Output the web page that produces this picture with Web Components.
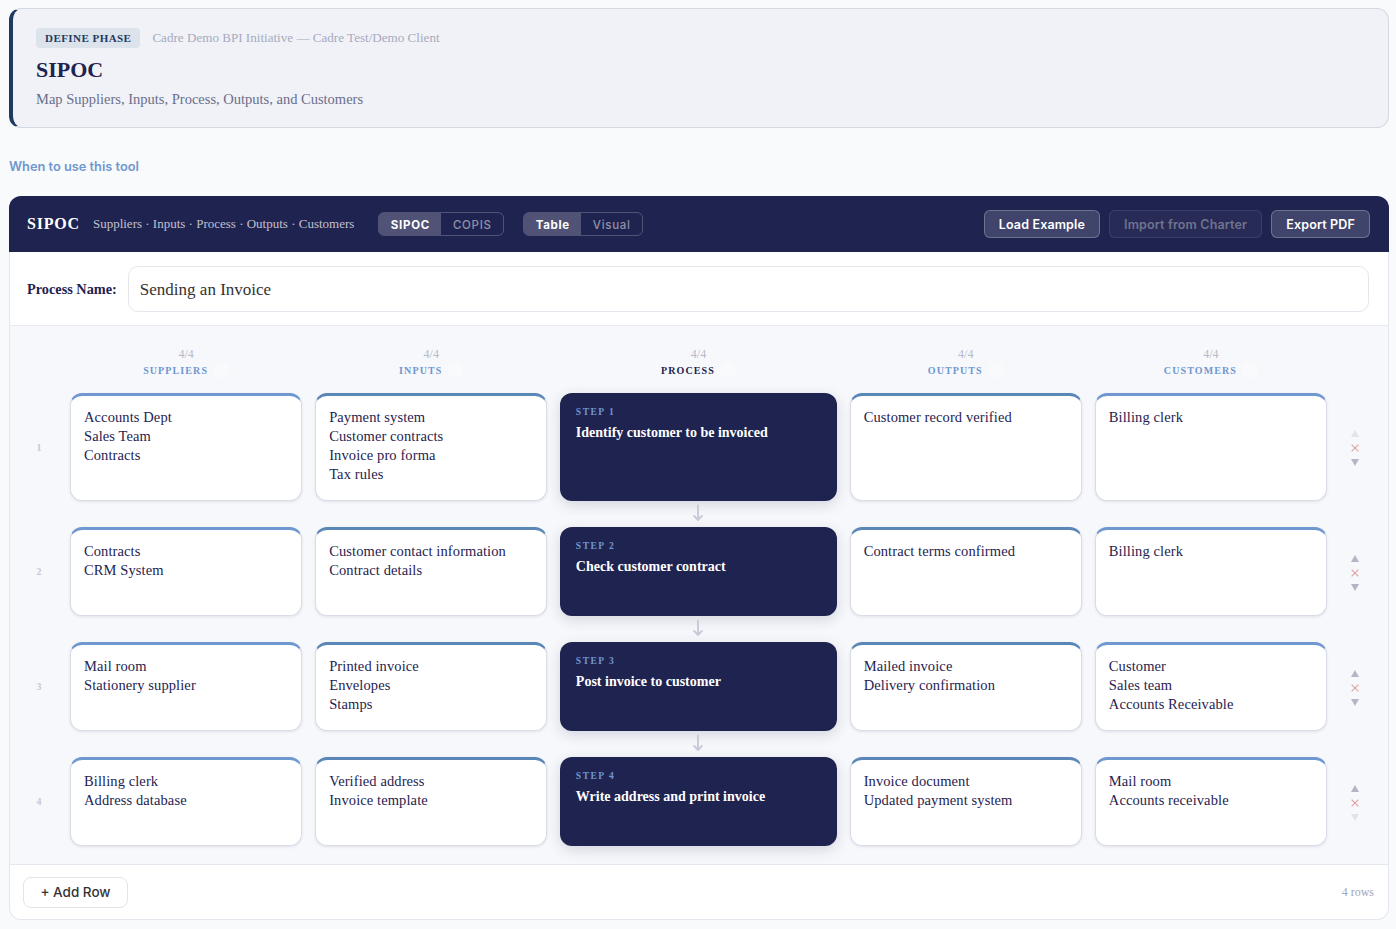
<!DOCTYPE html>
<html lang="en">
<head>
<meta charset="utf-8">
<title>SIPOC</title>
<style>
  html, body { margin: 0; padding: 0; }
  body {
    background: #f9fafc;
    padding: 8px 7px 8px 9px;
    font-family: "Liberation Serif", serif;
    color: #1f2350;
  }
</style>
</head>
<body>
<phase-header phase="DEFINE PHASE" meta="Cadre Demo BPI Initiative — Cadre Test/Demo Client" heading="SIPOC" sub="Map Suppliers, Inputs, Process, Outputs, and Customers"></phase-header>
<help-link>When to use this tool</help-link>
<sipoc-tool></sipoc-tool>

<script>
const SERIF = '"Liberation Serif", serif';
const SANS = 'Inter, "Liberation Sans", sans-serif';
const GRID_COLS = '30px 1fr 1fr 1.19fr 1fr 1fr 30px';

// Page header card
class PhaseHeader extends HTMLElement {
  connectedCallback() {
    this.attachShadow({ mode: 'open' });
    this.shadowRoot.innerHTML = `
      <style>
        :host {
          display: block;
          box-sizing: border-box;
          height: 120px;
          padding: 19px 23px 0;
          background: #f0f2f7;
          border: 1px solid #d3d8e3;
          border-left: 4px solid #1e3a5f;
          border-radius: 12px;
          font-family: ${SERIF};
        }
        .top { display: flex; align-items: center; gap: 12px; height: 20px; }
        .badge {
          background: #dde3eb;
          color: #1e3a5f;
          font-size: 11px;
          font-weight: 700;
          letter-spacing: .45px;
          padding: 0 9px;
          line-height: 20px;
          border-radius: 4px;
        }
        .meta { font-size: 13.1px; color: #a7aabd; }
        h1 { margin: 7px 0 0; font-size: 22px; line-height: 30px; font-weight: 700; color: #1f2350; }
        p { margin: 5px 0 0; font-size: 14.5px; line-height: 18px; color: #6b6e8a; }
      </style>
      <div class="top"><span class="badge">${this.getAttribute('phase')}</span><span class="meta">${this.getAttribute('meta')}</span></div>
      <h1>${this.getAttribute('heading')}</h1>
      <p>${this.getAttribute('sub')}</p>`;
  }
}

class HelpLink extends HTMLElement {
  connectedCallback() {
    this.attachShadow({ mode: 'open' });
    this.shadowRoot.innerHTML = `
      <style>
        :host {
          display: block;
          height: 68px;
          box-sizing: border-box;
          padding-top: 30px;
          font: 600 12.8px/18px ${SANS};
          color: #6f97d0;
        }
      </style><slot></slot>`;
  }
}

// Two-option pill in the dark bar
class SegToggle extends HTMLElement {
  connectedCallback() {
    this.attachShadow({ mode: 'open' });
    const opts = this.getAttribute('options').split(',');
    this.shadowRoot.innerHTML = `
      <style>
        :host {
          display: inline-flex;
          height: 24px;
          box-sizing: border-box;
          border: 1px solid rgba(255,255,255,.22);
          border-radius: 6px;
          overflow: hidden;
          font: 600 11.5px/24px ${SANS};
          letter-spacing: .7px;
        }
        span { padding: 0 11.5px; color: rgba(255,255,255,.5); font-weight: 500; }
        span.on { background: rgba(255,255,255,.22); color: #fff; font-weight: 700; }
      </style>
      ${opts.map((o, i) => `<span class="${i === 0 ? 'on' : ''}">${o}</span>`).join('')}`;
  }
}

class BarButton extends HTMLElement {
  connectedCallback() {
    this.attachShadow({ mode: 'open' });
    this.shadowRoot.innerHTML = `
      <style>
        :host {
          display: inline-block;
          box-sizing: border-box;
          height: 28px;
          padding: 0 14px;
          border: 1px solid rgba(255,255,255,.25);
          border-radius: 6px;
          background: rgba(255,255,255,.15);
          color: #fff;
          font: 600 12.5px/27px ${SANS};
          letter-spacing: .15px;
        }
        :host([disabled]) {
          background: rgba(255,255,255,.04);
          border-color: rgba(255,255,255,.1);
          color: rgba(255,255,255,.35);
        }
      </style><slot></slot>`;
  }
}

// One row of the table: number, five cells, controls
class SipocRow extends HTMLElement {
  connectedCallback() {
    this.attachShadow({ mode: 'open' });
    this.shadowRoot.innerHTML = `
      <style>
        :host {
          display: grid;
          grid-template-columns: ${GRID_COLS};
          column-gap: 13px;
        }
      </style><slot></slot>`;
  }
}

class ColHead extends HTMLElement {
  connectedCallback() {
    this.attachShadow({ mode: 'open' });
    const label = this.getAttribute('label');
    const dark = this.hasAttribute('dark');
    this.shadowRoot.innerHTML = `
      <style>
        :host { display: block; text-align: center; font-family: ${SERIF}; padding-top: 1px; }
        .count { font-size: 12px; line-height: 14px; color: #b6b9c8; }
        .label {
          display: flex;
          justify-content: center;
          align-items: center;
          gap: 5px;
          height: 16px;
          margin-top: 1px;
          font-size: 10px;
          font-weight: 700;
          letter-spacing: 1.1px;
          color: ${dark ? '#1f2350' : '#6f97d0'};
        }
        i { width: 16px; height: 16px; border-radius: 50%; background: #f9fafc; }
      </style>
      <div class="count">${this.getAttribute('count')}</div>
      <div class="label">${label}<i></i></div>`;
  }
}

class SipocCell extends HTMLElement {
  connectedCallback() {
    this.attachShadow({ mode: 'open' });
    this.shadowRoot.innerHTML = `
      <style>
        :host {
          display: block;
          box-sizing: border-box;
          min-height: 89px;
          padding: 12px 14px 16px 13px;
          background: #fff;
          border: 1px solid #d9dce6;
          border-top: 3px solid var(--accent, #6f97d0);
          border-radius: 12px;
          box-shadow: 0 1px 3px rgba(31,35,80,.1);
          font: 14.5px/19px ${SERIF};
          letter-spacing: .1px;
          color: #1f2350;
        }
        .t { white-space: pre-line; }
      </style><div class="t"><slot></slot></div>`;
  }
}

class StepCell extends HTMLElement {
  connectedCallback() {
    this.attachShadow({ mode: 'open' });
    const last = this.hasAttribute('last');
    this.shadowRoot.innerHTML = `
      <style>
        :host {
          display: block;
          position: relative;
          box-sizing: border-box;
          padding: 13px 15.5px;
          background: #1f2350;
          border-radius: 12px;
          box-shadow: 0 4px 14px rgba(31,35,80,.16);
          font-family: ${SERIF};
          color: #fff;
        }
        .n { font-size: 9.5px; line-height: 12px; font-weight: 700; letter-spacing: 1.5px; color: #6f97d0; }
        .t { margin-top: 5px; font-size: 14px; line-height: 19px; font-weight: 700; }
        svg { position: absolute; left: 50%; bottom: -21px; margin-left: -5px; }
      </style>
      <div class="n">STEP ${this.getAttribute('step')}</div>
      <div class="t"><slot></slot></div>
      ${last ? '' : `<svg width="10" height="18" viewBox="0 0 10 18" fill="none" stroke="#c8cbd9" stroke-width="2" stroke-linecap="round" stroke-linejoin="round"><path d="M5 1.5V16M1.2 12 5 16l3.8-4"/></svg>`}`;
  }
}

class RowControls extends HTMLElement {
  connectedCallback() {
    this.attachShadow({ mode: 'open' });
    const up = this.hasAttribute('no-up') ? '#e1e3ea' : '#b3b6c6';
    const down = this.hasAttribute('no-down') ? '#e1e3ea' : '#b3b6c6';
    this.shadowRoot.innerHTML = `
      <style>
        :host {
          display: flex;
          flex-direction: column;
          align-items: center;
          justify-content: center;
          gap: 7px;
          padding-top: 2px;
        }
        svg { display: block; }
      </style>
      <svg width="8" height="7" viewBox="0 0 8 7"><path d="M4 0 8 7H0z" fill="${up}"/></svg>
      <svg width="8" height="8" viewBox="0 0 8 8" fill="none" stroke="#e3a3a3" stroke-width="1.2"><path d="M.6.6l6.8 6.8M7.4.6.6 7.4"/></svg>
      <svg width="8" height="7" viewBox="0 0 8 7"><path d="M0 0h8L4 7z" fill="${down}"/></svg>`;
  }
}

class RowNum extends HTMLElement {
  connectedCallback() {
    this.attachShadow({ mode: 'open' });
    this.shadowRoot.innerHTML = `
      <style>
        :host {
          display: flex;
          align-items: center;
          justify-content: center;
          padding-right: 6px;
          font: 700 10px ${SERIF};
          color: #c6c9d6;
        }
      </style><slot></slot>`;
  }
}

const ROWS = [
  { s: 'Accounts Dept\nSales Team\nContracts', i: 'Payment system\nCustomer contracts\nInvoice pro forma\nTax rules', p: 'Identify customer to be invoiced', o: 'Customer record verified', c: 'Billing clerk' },
  { s: 'Contracts\nCRM System', i: 'Customer contact information\nContract details', p: 'Check customer contract', o: 'Contract terms confirmed', c: 'Billing clerk' },
  { s: 'Mail room\nStationery supplier', i: 'Printed invoice\nEnvelopes\nStamps', p: 'Post invoice to customer', o: 'Mailed invoice\nDelivery confirmation', c: 'Customer\nSales team\nAccounts Receivable' },
  { s: 'Billing clerk\nAddress database', i: 'Verified address\nInvoice template', p: 'Write address and print invoice', o: 'Invoice document\nUpdated payment system', c: 'Mail room\nAccounts receivable' }
];

// The whole tool panel
class SipocTool extends HTMLElement {
  connectedCallback() {
    this.attachShadow({ mode: 'open' });
    const rows = ROWS.map((r, idx) => `
      <sipoc-row>
        <row-num>${idx + 1}</row-num>
        <sipoc-cell>${r.s}</sipoc-cell>
        <sipoc-cell style="--accent:#5b86b8">${r.i}</sipoc-cell>
        <step-cell step="${idx + 1}" ${idx === ROWS.length - 1 ? 'last' : ''}>${r.p}</step-cell>
        <sipoc-cell style="--accent:#5b86b8">${r.o}</sipoc-cell>
        <sipoc-cell>${r.c}</sipoc-cell>
        <row-controls ${idx === 0 ? 'no-up' : ''} ${idx === ROWS.length - 1 ? 'no-down' : ''}></row-controls>
      </sipoc-row>`).join('');

    this.shadowRoot.innerHTML = `
      <style>
        :host {
          display: block;
          box-sizing: border-box;
          height: 724px;
          font-family: ${SERIF};
        }
        .bar {
          display: flex;
          align-items: center;
          height: 56px;
          padding: 0 19px 0 18px;
          background: #1f2350;
          color: #fff;
          border-radius: 12px 12px 0 0;
        }
        .brand { font-size: 16px; font-weight: 700; letter-spacing: .8px; margin-right: 13px; }
        .tag { font-size: 13px; color: rgba(255,255,255,.72); margin-right: 24px; white-space: nowrap; }
        .bar seg-toggle + seg-toggle { margin-left: 19px; }
        .actions { margin-left: auto; display: flex; gap: 9px; }
        .panel {
          height: 668px;
          box-sizing: border-box;
          background: #fff;
          border: 1px solid #e5e7ee;
          border-top: 0;
          border-radius: 0 0 12px 12px;
          overflow: hidden;
        }
        .name {
          display: flex;
          align-items: center;
          gap: 11px;
          height: 74px;
          box-sizing: border-box;
          padding: 0 19px 0 17px;
          border-bottom: 1px solid #e9ebf0;
        }
        .name label { font-size: 14.3px; font-weight: 700; color: #1f2350; white-space: nowrap; padding-top: 1px; }
        .field {
          flex: 1;
          height: 46px;
          box-sizing: border-box;
          padding: 0 11px;
          border: 1px solid #e5e7ee;
          border-radius: 10px;
          font-size: 17px;
          line-height: 45px;
          color: #333;
        }
        .grid {
          background: #f7f8fb;
          height: 539px;
          box-sizing: border-box;
          padding: 20px 18px 18px 17px;
          border-bottom: 1px solid #e5e7ee;
          display: flex;
          flex-direction: column;
          gap: 26px;
        }
        .grid .head { margin-bottom: -11px; }
        .foot {
          display: flex;
          align-items: center;
          justify-content: space-between;
          height: 55px;
          padding: 0 14px 0 13px;
          box-sizing: border-box;
        }
        .add {
          box-sizing: border-box;
          height: 31px;
          padding: 0 16.5px;
          border: 1px solid #e2e4ea;
          border-radius: 8px;
          font: 500 13.5px/29px ${SANS};
          color: #333;
        }
        .count { font-size: 12px; color: #a3a6b8; }
      </style>
      <div class="bar">
        <span class="brand">SIPOC</span>
        <span class="tag">Suppliers · Inputs · Process · Outputs · Customers</span>
        <seg-toggle options="SIPOC,COPIS"></seg-toggle>
        <seg-toggle options="Table,Visual"></seg-toggle>
        <div class="actions">
          <bar-button>Load Example</bar-button>
          <bar-button disabled>Import from Charter</bar-button>
          <bar-button>Export PDF</bar-button>
        </div>
      </div>
      <div class="panel">
        <div class="name">
          <label>Process Name:</label>
          <div class="field">Sending an Invoice</div>
        </div>
        <div class="grid">
          <sipoc-row class="head">
            <span></span>
            <col-head count="4/4" label="SUPPLIERS"></col-head>
            <col-head count="4/4" label="INPUTS"></col-head>
            <col-head count="4/4" label="PROCESS" dark></col-head>
            <col-head count="4/4" label="OUTPUTS"></col-head>
            <col-head count="4/4" label="CUSTOMERS"></col-head>
            <span></span>
          </sipoc-row>
          ${rows}
        </div>
        <div class="foot">
          <div class="add">+ Add Row</div>
          <div class="count">4 rows</div>
        </div>
      </div>`;
  }
}

customElements.define('phase-header', PhaseHeader);
customElements.define('help-link', HelpLink);
customElements.define('seg-toggle', SegToggle);
customElements.define('bar-button', BarButton);
customElements.define('sipoc-row', SipocRow);
customElements.define('col-head', ColHead);
customElements.define('sipoc-cell', SipocCell);
customElements.define('step-cell', StepCell);
customElements.define('row-controls', RowControls);
customElements.define('row-num', RowNum);
customElements.define('sipoc-tool', SipocTool);
</script>
</body>
</html>
